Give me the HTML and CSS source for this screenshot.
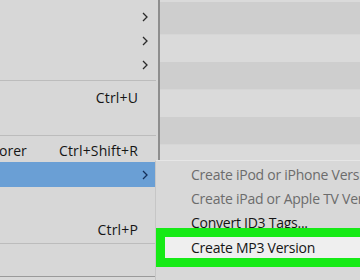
FILE: index.html
```html
<!DOCTYPE html>
<html lang="en">
<head>
    <meta charset="UTF-8">
    <title>Menu</title>
    <link rel="stylesheet" href="styles.css">
</head>
<body>
    <!-- main context menu (cropped) -->
    <div class="menu">
        <div class="row"><span></span><svg class="chev" viewBox="0 0 6 10"><polyline points="1,1 5,5 1,9"/></svg></div>
        <div class="row"><span></span><svg class="chev" viewBox="0 0 6 10"><polyline points="1,1 5,5 1,9"/></svg></div>
        <div class="row"><span></span><svg class="chev" viewBox="0 0 6 10"><polyline points="1,1 5,5 1,9"/></svg></div>
        <div class="sep sep-a"></div>
        <div class="row"><span></span><span class="key">Ctrl+U</span></div>
        <div class="row"></div>
        <div class="sep sep-b"></div>
        <div class="row row-short"><span class="cut">orer</span><span class="key">Ctrl+Shift+R</span></div>
        <div class="row active"><span></span><svg class="chev" viewBox="0 0 6 10"><polyline points="1,1 5,5 1,9"/></svg></div>
        <div class="row row-tall"></div>
        <div class="row"><span></span><span class="key">Ctrl+P</span></div>
        <div class="sep sep-c"></div>
        <div class="row-rest"></div>
    </div>

    <!-- list behind the menu -->
    <div class="list"></div>

    <!-- submenu popup -->
    <div class="submenu">
        <div class="item disabled">Create iPod or iPhone Version</div>
        <div class="item disabled">Create iPad or Apple TV Version</div>
        <div class="item">Convert ID3 Tags...</div>
        <div class="item hover">Create MP3 Version</div>
    </div>
</body>
</html>
```

FILE: styles.css
```css
body {
    margin: 0;
    width: 360px;
    height: 280px;
    overflow: hidden;
    display: flex;
    position: relative;
    font-family: 'Open Sans', 'Noto Sans', sans-serif;
    font-size: 14px;
    color: #151515;
    background: #d9d9d9;
}

.menu {
    width: 160px;
    height: 277px;
    flex-shrink: 0;
    background: #d7d7d7;
    border-right: 2px solid #8e8e8e;
    border-bottom: 1px solid #9a9a9a;
    padding-top: 5px;
    box-sizing: border-box;
    display: flex;
    flex-direction: column;
}

.row {
    height: 24px;
    display: flex;
    align-items: center;
    justify-content: space-between;
    padding-right: 10px;
    flex-shrink: 0;
}

.row-short {
    height: 23px;
}

.row-tall {
    height: 30px;
}

.row.active {
    height: 25px;
    margin-right: 3px;
    padding-right: 7px;
    background: #6a9fd5;
}

.row.active .chev polyline {
    stroke: #15305a;
}

.key {
    margin-right: 10px;
    letter-spacing: 0.15px;
}

.cut {
    margin-left: -1px;
}

.chev {
    width: 6px;
    height: 10px;
}

.chev polyline {
    fill: none;
    stroke: #2a2a2a;
    stroke-width: 1.3;
}

.sep {
    flex-shrink: 0;
    border-top: 1px solid #bcbcbc;
    margin-right: 2px;
}

.sep-a {
    margin-top: 3px;
    margin-bottom: 4px;
}

.sep-b {
    margin-top: 2px;
    margin-bottom: 3px;
}

.sep-c {
    margin-top: 2px;
    margin-bottom: 3px;
}

.list {
    flex: 1;
    background: repeating-linear-gradient(to bottom, #cecece 0 27px, #d6d6d6 27px 28px, #dadada 28px 55px);
    background-position: 0 7px;
}

.submenu {
    position: absolute;
    left: 155px;
    top: 160px;
    width: 220px;
    height: 130px;
    background: #d8d8d8;
    border-top: 1px solid #e6e6e6;
    border-left: 1px solid #c6c6c6;
    padding-top: 2px;
    white-space: nowrap;
    letter-spacing: -0.25px;
}

.item {
    height: 24px;
    line-height: 24px;
    padding-left: 35px;
}

.item.disabled {
    color: #6c6c6c;
}

.item.hover {
    height: 21px;
    line-height: 21px;
    margin-top: 2px;
    margin-left: 9px;
    padding-left: 26px;
    background: #efefef;
    outline: 9px solid #16ea16;
}
```
